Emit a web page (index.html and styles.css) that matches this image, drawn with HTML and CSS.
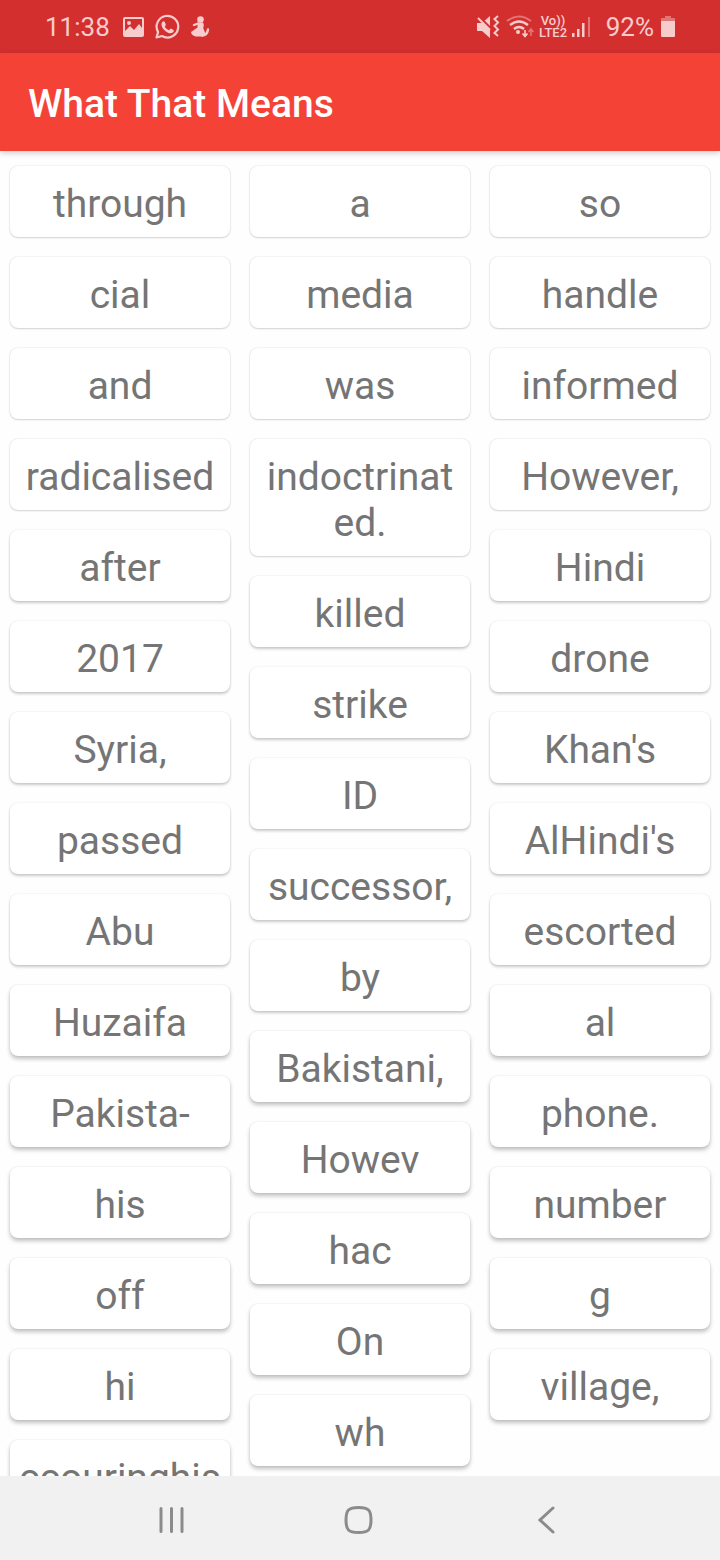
FILE: index.html
```html
<!DOCTYPE html>
<html lang="en">
<head>
<meta charset="utf-8">
<meta name="viewport" content="width=device-width, initial-scale=1">
<title>What That Means</title>
<link rel="stylesheet" href="styles.css">
</head>
<body>
<div class="status">
  <time class="clock">11:38</time>
  <svg class="notices" width="90" height="28" viewBox="0 0 90 28" fill="currentColor" aria-hidden="true">
    <path fill-rule="evenodd" d="M3 4h17a2 2 0 0 1 2 2v16a2 2 0 0 1-2 2H3a2 2 0 0 1-2-2V6a2 2 0 0 1 2-2zM3 6v12l5-5 4 4 5-6 3 4V6zM7 8a2 2 0 1 1 0 4 2 2 0 0 1 0-4z"/>
    <path d="M34.500 24.500l1.600-5.400A10.800 10.800 0 1 1 40 23z" fill="none" stroke="currentColor" stroke-width="2.200" stroke-linejoin="round"/>
    <path d="M40 9.500c.8-1.500 2.200-1.500 2.800-.4l1 2.300c.3.800-.8 1.600-1 2.200.8 1.900 2.200 3 4.200 3.700.9-.4 1.300-2 2-1.700l2.500 1.300c.8.600-.1 2.700-1.700 3.200-4 1.200-10.500-4.600-10.300-8.700 0-.8.200-1.400.5-1.900z"/>
    <circle cx="78.500" cy="6.500" r="3.300"/>
    <path d="M75.500 9.500H81c1.200 2 .8 4 .2 5.500l2 5-2.200 3.500h-7.500c-2.500-.5-4.500-2.500-4.500-4.500l6.500-4.500z"/>
    <path d="M76 10.500l-4 1.500" fill="none" stroke="currentColor" stroke-width="2.400" stroke-linecap="round"/>
    <path d="M80 22.500c3.500 0 5.500-2.500 6-6" fill="none" stroke="currentColor" stroke-width="2.400" stroke-linecap="round"/>
  </svg>
  <svg class="system" width="118" height="28" viewBox="0 0 118 28" fill="currentColor" aria-hidden="true">
    <path d="M1 10h5l8-7v22l-8-7H1z"/>
    <path d="M1 2l14 14" stroke="#d32f2f" stroke-width="3"/>
    <path d="M2 5l12 12M22 3l-3.500 3 3.500 3.500-3.500 3.500 3.500 3.500-3.500 3.500 3.500 3" fill="none" stroke="currentColor" stroke-width="2"/>
    <path d="M31 8q12-9 24 0" fill="none" stroke="currentColor" stroke-width="2" opacity=".45"/>
    <path d="M34 12q9-7 18 0M38 16q5-4 10 0" fill="none" stroke="currentColor" stroke-width="2.400"/>
    <circle cx="42" cy="19" r="2"/>
    <path d="M49 17v6M46.500 20.500l2.500 3 2.500-3" fill="none" stroke="currentColor" stroke-width="1.600"/>
    <path d="M55 23v-6M52.500 19l2.500-3 2.500 3" fill="none" stroke="currentColor" stroke-width="1.600" opacity=".45"/>
    <text class="net" x="77" y="12" text-anchor="middle">Vo))</text>
    <text class="net" x="77" y="24" text-anchor="middle">LTE2</text>
    <path d="M96 20h2.500v4H96zM101 16h2.500v8H101zM106 10h2.500v14H106z"/>
    <path d="M112 4h2v20h-2z" opacity=".45"/>
  </svg>
  <span class="charge">92%</span>
  <svg width="14" height="22" viewBox="0 0 14 22" fill="currentColor" aria-hidden="true">
    <path d="M4 0h6v2h4v4H0V2h4z" opacity=".45"/><path d="M0 5h14v15a1 1 0 0 1-1 1H1a1 1 0 0 1-1-1z"/>
  </svg>
</div>
<header class="appbar"><h1>What That Means</h1></header>
<main class="words">
  <ul class="column">
    <li>through</li><li>cial</li><li>and</li><li>radicalised</li><li>after</li><li>2017</li><li>Syria,</li><li>passed</li><li>Abu</li><li>Huzaifa</li><li>Pakista-</li><li>his</li><li>off</li><li>hi</li><li>ccouringhis</li>
  </ul>
  <ul class="column">
    <li>a</li><li>media</li><li>was</li><li>indoctrinated.</li><li>killed</li><li>strike</li><li>ID</li><li>successor,</li><li>by</li><li>Bakistani,</li><li>Howev</li><li>hac</li><li>On</li><li>wh</li>
  </ul>
  <ul class="column">
    <li>so</li><li>handle</li><li>informed</li><li>However,</li><li>Hindi</li><li>drone</li><li>Khan's</li><li>AlHindi's</li><li>escorted</li><li>al</li><li>phone.</li><li>number</li><li>g</li><li>village,</li>
  </ul>
</main>
<nav class="navbar">
  <button type="button" aria-label="Recent apps"><svg width="32" height="32" viewBox="0 0 32 32"><path d="M6 4.500v23M16.500 4.500v23M27 4.500v23"/></svg></button>
  <button type="button" aria-label="Home"><svg width="32" height="32" viewBox="0 0 32 32"><path d="M15.500 3.500C25.500 3.500 28 6 28 16S25.500 28.500 15.500 28.500 3 26 3 16 5.500 3.500 15.500 3.500z"/></svg></button>
  <button type="button" aria-label="Back"><svg width="32" height="32" viewBox="0 0 32 32"><path d="M21 4L8 16l13 12"/></svg></button>
</nav>
</body>
</html>
```
FILE: styles.css
```css
* { box-sizing: border-box; }
body {
  margin: 0;
  height: 100vh;
  display: flex;
  flex-direction: column;
  background: #fefefe;
  color: #757575;
  font-family: Roboto, "Liberation Sans", sans-serif;
}
.status {
  flex: none;
  height: 53px;
  padding: 0 45px;
  display: flex;
  align-items: center;
  background: #d32f2f;
  color: #f6cccc;
  font-size: 26px;
}
.notices { margin-left: 12px; }
.system { margin-left: auto; }
.charge { margin: 0 7px 0 12px; }
.net { font-size: 13px; font-weight: 500; }
.appbar {
  flex: none;
  height: 98px;
  padding: 4px 28px 0;
  display: flex;
  align-items: center;
  position: relative;
  background: #f44336;
  color: #fff;
  box-shadow: 0 2px 6px rgba(0, 0, 0, .2);
}
.appbar h1 { margin: 0; font-size: 39px; font-weight: 500; }
.words {
  flex: 1;
  min-height: 0;
  overflow: hidden;
  display: grid;
  grid-template-columns: repeat(3, minmax(0, 1fr));
  align-items: start;
  gap: 20px;
  padding: 15px 10px 0;
}
.column {
  margin: 0;
  padding: 0;
  list-style: none;
  display: flex;
  flex-direction: column;
  gap: 20px;
}
.column li {
  padding: 15px 8px 10px;
  border-radius: 8px;
  background: #fff;
  box-shadow: 0 0 2px rgba(0, 0, 0, .14), 0 1px 2px rgba(0, 0, 0, .14);
  font-size: 39px;
  line-height: 46px;
  text-align: center;
  word-break: break-all;
}
.column li:nth-child(n+5) { box-shadow: 0 0 2px rgba(0, 0, 0, .1), 0 2px 3px rgba(0, 0, 0, .2); }
.column li:nth-child(n+10) { box-shadow: 0 0 2px rgba(0, 0, 0, .1), 0 3px 4px rgba(0, 0, 0, .24); }
.navbar {
  flex: none;
  height: 84px;
  padding: 3px 78px 0 77px;
  display: grid;
  grid-template-columns: repeat(3, 1fr);
  align-items: center;
  position: relative;
  background: #f1f1f1;
}
.navbar button {
  padding: 0;
  border: 0;
  background: none;
  display: flex;
  justify-content: center;
}
.navbar svg {
  fill: none;
  stroke: #8b8b8b;
  stroke-width: 3;
  stroke-linecap: round;
}
```
